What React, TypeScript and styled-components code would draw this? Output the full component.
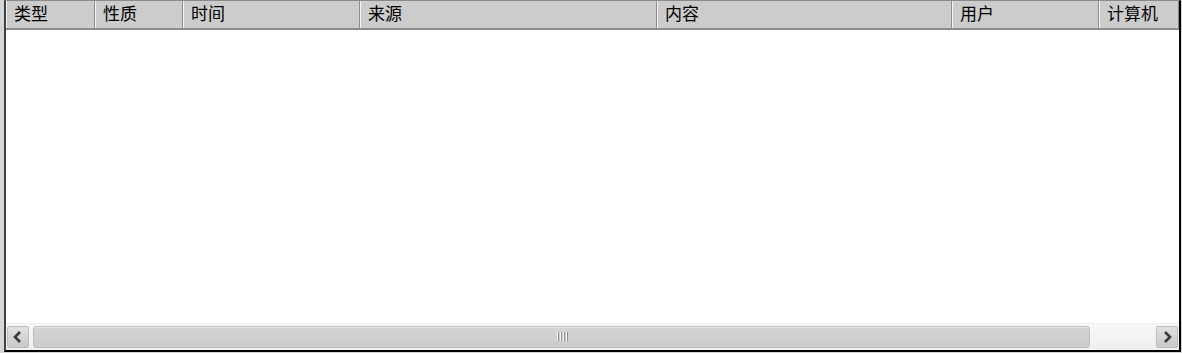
import React from "react";
import styled, { createGlobalStyle } from "styled-components";

const GlobalStyle = createGlobalStyle`
  html, body {
    margin: 0;
    padding: 0;
    background: #d6d6d6;
  }
  * {
    box-sizing: border-box;
  }
`;

const Frame = styled.div`
  width: 1182px;
  height: 353px;
  padding: 0 1px 1px 4px;
  background: #d6d6d6;
  display: flex;
`;

const Panel = styled.div`
  flex: 1;
  display: flex;
  flex-direction: column;
  background: #fff;
  border-left: 2px solid #404040;
  border-top: 1px solid #8a8a8a;
  border-right: 2px solid #000;
  border-bottom: 2px solid #000;
  overflow: hidden;
`;

const Header = styled.div`
  display: grid;
  grid-template-columns: 89px 88px 177px 297px 295px 147px 1fr;
  height: 29px;
  background: #cccccc;
  border-bottom: 2px solid #8c8c8c;
`;

const HeaderCell = styled.div`
  display: flex;
  align-items: flex-start;
  padding: 2px 0 0 7px;
  border-left: 1px solid #f4f4f4;
  border-right: 1px solid #8c8c8c;
  font-family: "Noto Sans CJK SC", "Liberation Sans", sans-serif;
  font-size: 17px;
  font-weight: 400;
  line-height: 20px;
  color: #000;
  white-space: nowrap;
  overflow: hidden;
`;

const Body = styled.div`
  flex: 1;
  background: #fff;
`;

const ScrollBar = styled.div`
  height: 27px;
  display: flex;
  align-items: center;
  padding: 0 1px 1px 1px;
  background: linear-gradient(#f8f8f8, #efefef);
  border-top: 1px solid #f0f0f0;
`;

const ArrowButton = styled.div`
  width: 22px;
  height: 22px;
  display: flex;
  align-items: center;
  justify-content: center;
  background: linear-gradient(#e2e2e2, #c8c8c8);
  border: 1px solid #bdbdbd;
  border-radius: 2px;
`;

const Track = styled.div`
  flex: 1;
  height: 22px;
  display: flex;
  padding: 0 2px;
`;

const Thumb = styled.div`
  width: 1057px;
  height: 22px;
  margin-left: 2px;
  display: flex;
  align-items: center;
  justify-content: center;
  background: linear-gradient(#d4d4d4, #cbcbcb);
  border: 1px solid #bcbcbc;
  box-shadow: inset 0 1px 0 #e6e6e6;
  border-radius: 3px;
`;

const Grip = styled.div`
  display: flex;
  gap: 2px;
`;

const GripLine = styled.span`
  width: 1px;
  height: 9px;
  background: #f4f4f4;
  box-shadow: 1px 0 0 #8f8f8f;
`;

const Chevron = ({ dir }: { dir: "left" | "right" }) => (
  <svg width="12" height="14" viewBox="0 0 12 14">
    <path
      d={dir === "left" ? "M8 2 L3 7 L8 12" : "M4 2 L9 7 L4 12"}
      fill="none"
      stroke="#3a3a3a"
      strokeWidth="2.6"
      strokeLinejoin="miter"
    />
  </svg>
);

const columns = ["类型", "性质", "时间", "来源", "内容", "用户", "计算机"];

export default function App() {
  return (
    <>
      <GlobalStyle />
      <Frame>
        <Panel>
          <Header>
            {columns.map((c) => (
              <HeaderCell key={c}>{c}</HeaderCell>
            ))}
          </Header>
          <Body />
          <ScrollBar>
            <ArrowButton>
              <Chevron dir="left" />
            </ArrowButton>
            <Track>
              <Thumb>
                <Grip>
                  <GripLine />
                  <GripLine />
                  <GripLine />
                  <GripLine />
                </Grip>
              </Thumb>
            </Track>
            <ArrowButton>
              <Chevron dir="right" />
            </ArrowButton>
          </ScrollBar>
        </Panel>
      </Frame>
    </>
  );
}
